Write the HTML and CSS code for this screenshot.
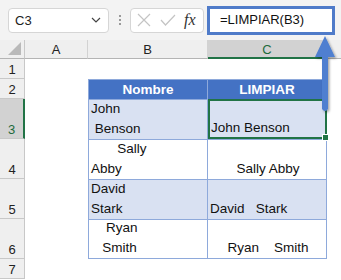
FILE: index.html
```
<!DOCTYPE html>
<html>

<head>
  <meta charset="utf-8">
  <title>LIMPIAR</title>
  <link rel="stylesheet" href="styles.css">
</head>

<body>
  <div class="app">
    <!-- barra de fórmulas -->
    <div class="toolbar">
      <div class="namebox">
        <span>C3</span>
        <svg class="chev" width="10" height="6" viewBox="0 0 10 6"><path d="M1 1 L5 5 L9 1" fill="none" stroke="#444" stroke-width="1.2"/></svg>
      </div>
      <div class="dots"><i></i><i></i><i></i></div>
      <div class="fxbox">
        <svg width="14" height="14" viewBox="0 0 14 14"><path d="M1 1 L13 13 M13 1 L1 13" stroke="#c4c4c4" stroke-width="1.2"/></svg>
        <svg width="16" height="12" viewBox="0 0 16 12"><path d="M1 6 L5.5 11 L15 1" fill="none" stroke="#c4c4c4" stroke-width="1.2"/></svg>
        <span class="fx">fx</span>
      </div>
      <div class="formula">=LIMPIAR(B3)</div>
    </div>

    <!-- hoja -->
    <div class="sheet">
      <div class="hd corner"><span class="tri"></span></div>
      <div class="hd col">A</div>
      <div class="hd col">B</div>
      <div class="hd col sel">C</div>
      <div class="hd col last"></div>

      <div class="hd row">1</div>
      <div class="cell"></div><div class="cell"></div><div class="cell"></div><div class="cell"></div>

      <div class="hd row">2</div>
      <div class="cell"></div>
      <div class="cell th first">Nombre</div>
      <div class="cell th">LIMPIAR</div>
      <div class="cell"></div>

      <div class="hd row rsel">3</div>
      <div class="cell"></div>
      <div class="cell td band first">John
 Benson</div>
      <div class="cell td band active">John Benson</div>
      <div class="cell"></div>

      <div class="hd row">4</div>
      <div class="cell"></div>
      <div class="cell td first">       Sally
Abby</div>
      <div class="cell td center">Sally Abby</div>
      <div class="cell"></div>

      <div class="hd row">5</div>
      <div class="cell"></div>
      <div class="cell td band first">David
Stark</div>
      <div class="cell td band">David   Stark</div>
      <div class="cell"></div>

      <div class="hd row">6</div>
      <div class="cell"></div>
      <div class="cell td first lastrow">    Ryan
   Smith</div>
      <div class="cell td center lastrow">Ryan    Smith</div>
      <div class="cell"></div>

      <div class="hd row">7</div>
      <div class="cell"></div><div class="cell"></div><div class="cell"></div><div class="cell"></div>
    </div>

    <!-- flecha -->
    <svg class="arrow" width="30" height="80" viewBox="0 0 30 80">
      <defs>
        <filter id="sh" x="-50%" y="-20%" width="200%" height="150%">
          <feDropShadow dx="1.5" dy="1.5" stdDeviation="1.2" flood-color="#000" flood-opacity="0.35"/>
        </filter>
      </defs>
      <path d="M15 1 L25 22 L18 22 L18 74 Q15 78 12 74 L12 22 L5 22 Z" fill="#4f7fd0" filter="url(#sh)"/>
    </svg>
  </div>
</body>

</html>
```

FILE: styles.css
```
body {
  margin: 0;
  font-family: "Liberation Sans", Arial, sans-serif;
  background-color: #fff;
}

.app {
  position: relative;
  width: 341px;
  height: 280px;
  overflow: hidden;
}

.toolbar {
  height: 40px;
  background-color: #f3f3f3;
  display: flex;
  align-items: center;
  padding-left: 8px;
  box-sizing: border-box;
}

.namebox {
  width: 101px;
  height: 25px;
  box-sizing: border-box;
  background-color: #fff;
  border: 1px solid #d6d6d6;
  border-radius: 4px;
  display: flex;
  align-items: center;
  justify-content: space-between;
  padding: 0 7px 0 6px;
  font-size: 13px;
  color: #222;
}

.dots {
  width: 21px;
  display: flex;
  flex-direction: column;
  align-items: center;
  gap: 2px;
}

.dots i {
  width: 2px;
  height: 2px;
  background-color: #9a9a9a;
}

.fxbox {
  width: 74px;
  height: 25px;
  box-sizing: border-box;
  background-color: #fff;
  border: 1px solid #d6d6d6;
  border-radius: 4px;
  display: flex;
  align-items: center;
  gap: 9px;
  padding-left: 6px;
}

.fx {
  font-family: "Liberation Serif", serif;
  font-style: italic;
  font-size: 16px;
  color: #333;
  margin-left: -1px;
}

.formula {
  margin-left: 3px;
  width: 128px;
  height: 29px;
  box-sizing: border-box;
  background-color: #fff;
  border: 3px solid #4f7bc9;
  font-size: 13px;
  color: #111;
  padding-left: 10px;
  line-height: 22px;
  flex-shrink: 0;
}

.sheet {
  display: grid;
  grid-template-columns: 25px 63px 120px 119px 14px;
  grid-template-rows: 19px 20px 20px 40px 40px 40px 40px 20px;
  font-size: 13.5px;
}

.hd {
  background-color: #efefef;
  color: #222;
  font-size: 13px;
  box-sizing: border-box;
}

.corner {
  position: relative;
  border-right: 1px solid #c8c8c8;
  border-bottom: 1px solid #b4b4b4;
}

.tri {
  position: absolute;
  right: 3px;
  bottom: 3px;
  width: 0;
  height: 0;
  border-left: 13px solid transparent;
  border-bottom: 13px solid #b9b9b9;
}

.col {
  text-align: center;
  line-height: 19px;
  border-right: 1px solid #d2d2d2;
  border-bottom: 1px solid #b4b4b4;
}

.col.last {
  border-right: none;
}

.col.sel {
  background-color: #d2d2d2;
  color: #1e6b3c;
  border-bottom: 2px solid #217346;
}

.row {
  display: flex;
  align-items: flex-end;
  justify-content: center;
  padding-bottom: 1px;
  border-right: 1px solid #c8c8c8;
  border-bottom: 1px solid #c8c8c8;
}

.row.rsel {
  background-color: #d2d2d2;
  color: #1e6b3c;
  border-right: 2px solid #217346;
}

.cell {
  box-sizing: border-box;
  white-space: pre;
  color: #111;
}

.th {
  background-color: #4472c4;
  color: #fff;
  font-weight: bold;
  text-align: center;
  line-height: 20px;
  border-top: 1px solid #8ea9db;
  border-right: 1px solid #8ea9db;
}

.th.first,
.td.first {
  border-left: 1px solid #8ea9db;
}

.td {
  display: flex;
  align-items: flex-end;
  line-height: 20px;
  padding-left: 2px;
  border-right: 1px solid #8ea9db;
  border-top: 1px solid #8ea9db;
}

.td.band {
  background-color: #d9e1f2;
}

.td.center {
  justify-content: center;
}

.td.lastrow {
  border-bottom: 1px solid #8ea9db;
}

.td.active {
  position: relative;
  border: 2px solid #217346;
  padding-left: 1px;
  line-height: 19px;
}

.td.active::after {
  content: "";
  position: absolute;
  right: -4px;
  bottom: -4px;
  width: 5px;
  height: 5px;
  background-color: #217346;
  border: 1px solid #fff;
}

.arrow {
  position: absolute;
  left: 310px;
  top: 35px;
}
```
